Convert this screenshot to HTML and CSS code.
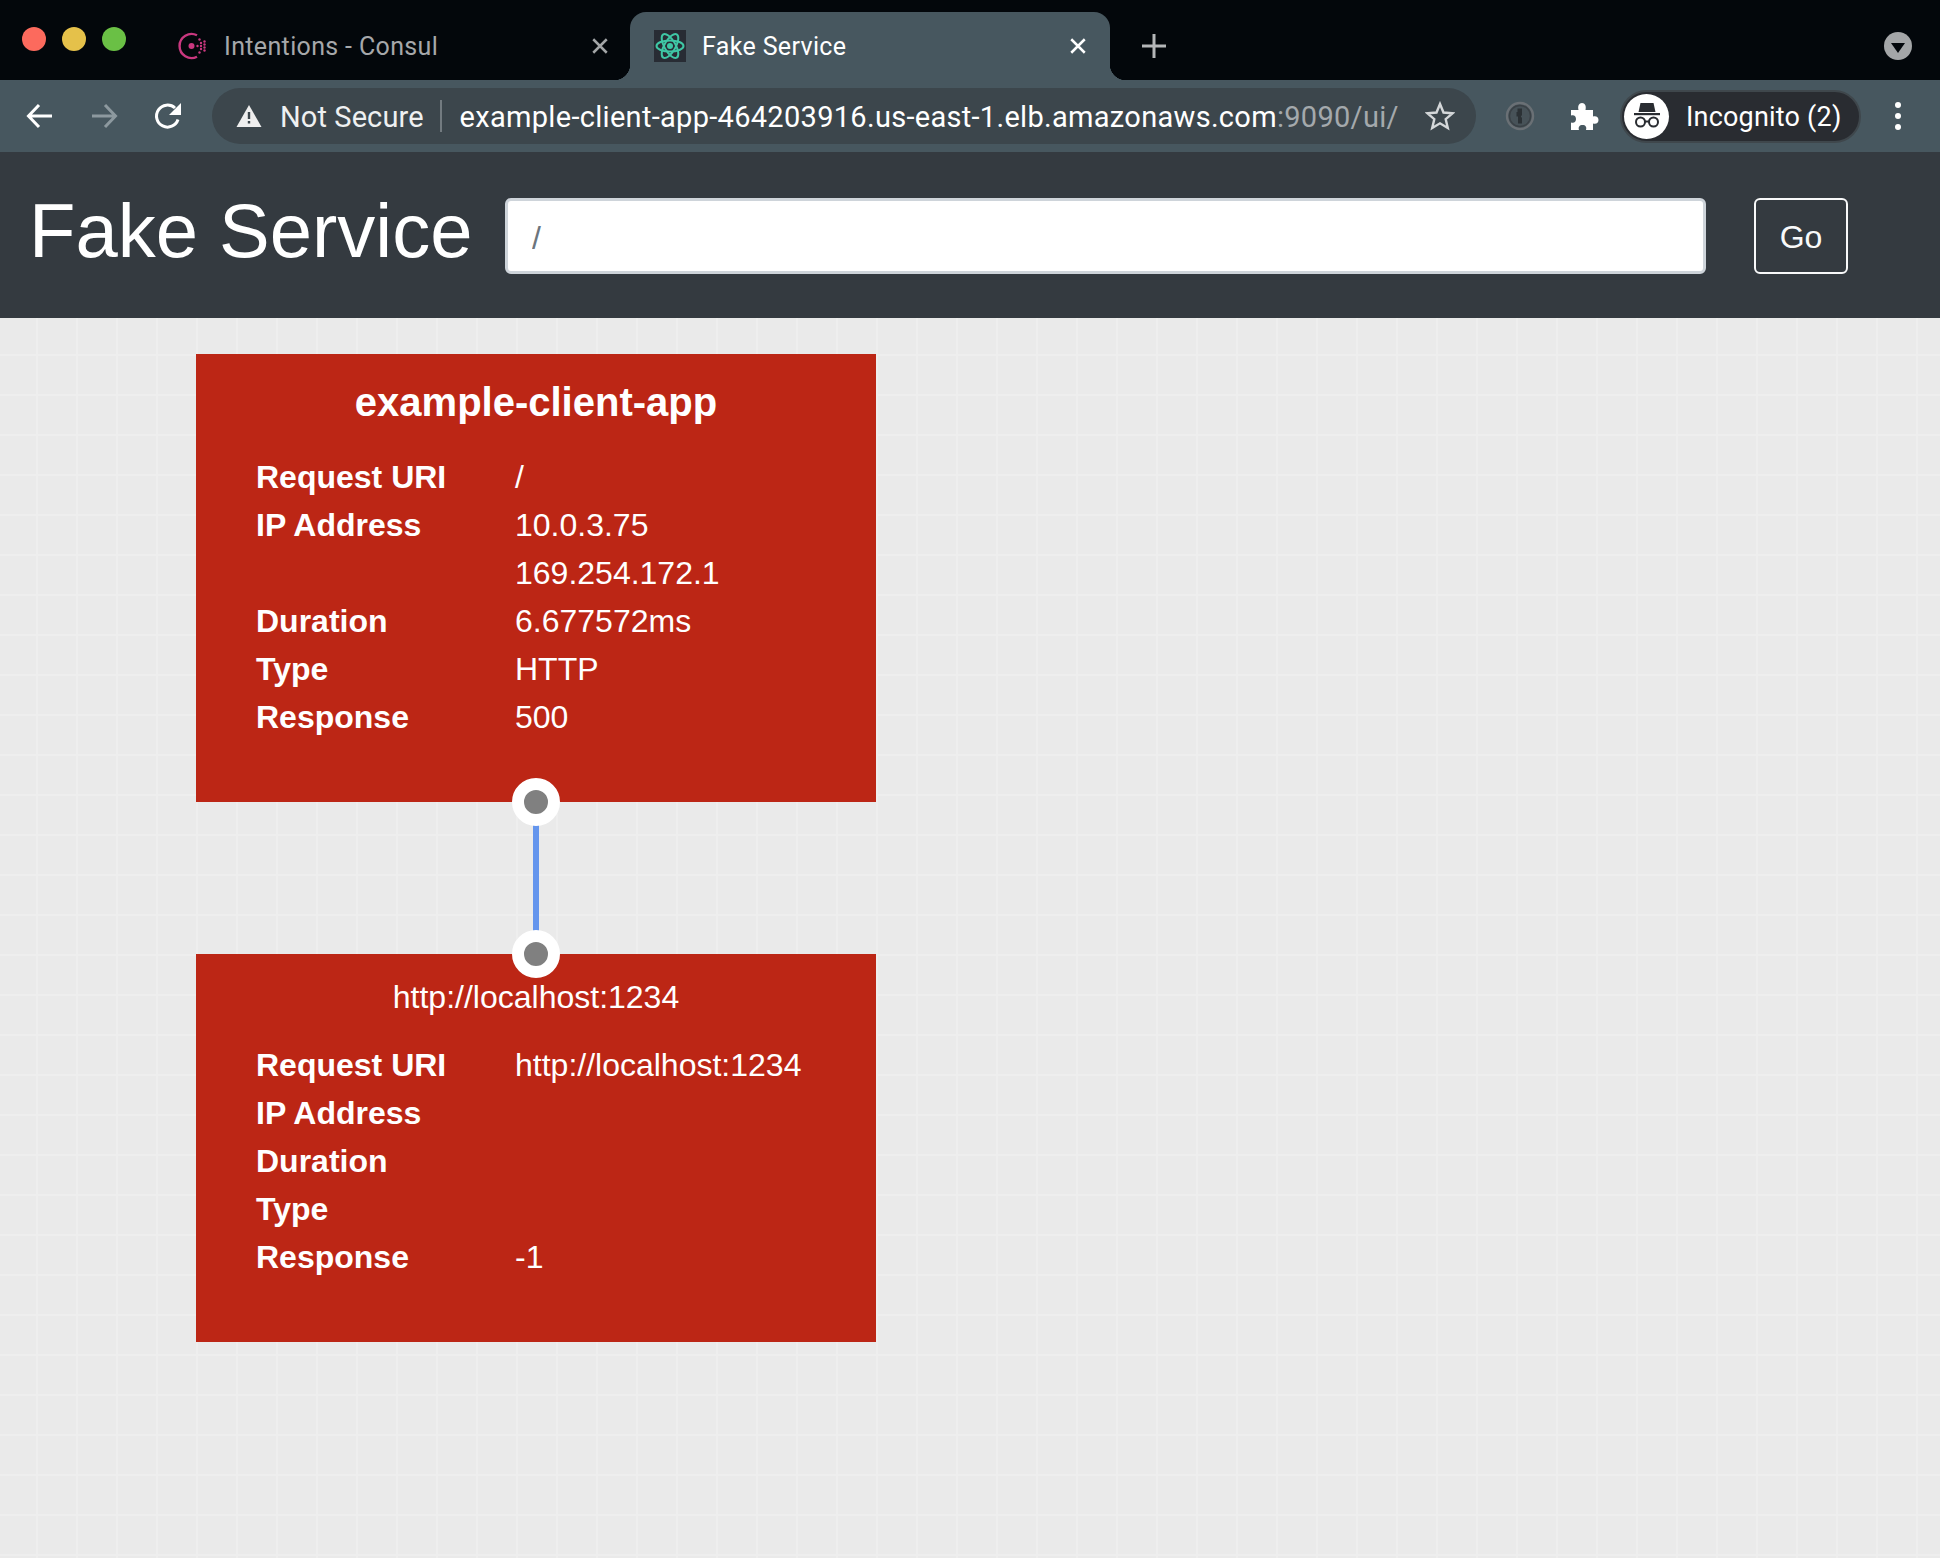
FILE: index.html
```html
<!DOCTYPE html>
<html lang="en">
<head>
    <meta charset="UTF-8">
    <title>Fake Service</title>
    <link rel="stylesheet" href="styles.css">
</head>
<body>
    <div class="tabstrip">
        <div class="lights">
            <span class="light red"></span>
            <span class="light yellow"></span>
            <span class="light green"></span>
        </div>
        <div class="tab">
            <svg class="favicon" viewBox="0 0 28 28">
                <path d="M19 3.300A12 12 0 1 0 19 24.700" fill="none" stroke="#c9387f" stroke-width="2.400"/>
                <circle cx="13.500" cy="14" r="3" fill="#c9387f"/>
                <g fill="#c9387f">
                    <circle cx="19.500" cy="14" r="1.200"/>
                    <circle cx="23" cy="11" r="1.200"/><circle cx="23" cy="14" r="1.200"/><circle cx="23" cy="17" r="1.200"/>
                    <circle cx="26.500" cy="9.500" r="1.200"/><circle cx="26.500" cy="12.500" r="1.200"/><circle cx="26.500" cy="15.500" r="1.200"/><circle cx="26.500" cy="18.500" r="1.200"/>
                    <circle cx="21.500" cy="7.500" r="1.200"/><circle cx="21.500" cy="20.500" r="1.200"/>
                </g>
            </svg>
            <span class="tab-title">Intentions - Consul</span>
            <svg class="tab-close" viewBox="0 0 16 16"><path d="M2 2L14 14M14 2L2 14" stroke="#a3a5a7" stroke-width="2.200"/></svg>
        </div>
        <div class="tab active">
            <div class="react-icon">
                <svg viewBox="0 0 32 32" width="32" height="32">
                    <g fill="none" stroke="#3fc7a5" stroke-width="2">
                        <ellipse cx="16" cy="16" rx="13.500" ry="5.600"/>
                        <ellipse cx="16" cy="16" rx="13.500" ry="5.600" transform="rotate(60 16 16)"/>
                        <ellipse cx="16" cy="16" rx="13.500" ry="5.600" transform="rotate(120 16 16)"/>
                    </g>
                    <circle cx="16" cy="16" r="3" fill="#3fc7a5"/>
                </svg>
            </div>
            <span class="tab-title">Fake Service</span>
            <svg class="tab-close" viewBox="0 0 16 16"><path d="M2 2L14 14M14 2L2 14" stroke="#fff" stroke-width="2.200"/></svg>
        </div>
        <svg class="new-tab" viewBox="0 0 26 26"><path d="M13 1V25M1 13H25" stroke="#b4b6b8" stroke-width="3"/></svg>
        <div class="tab-search"><span class="tab-search-arrow"></span></div>
    </div>

    <div class="toolbar">
        <svg class="nav-icon" viewBox="0 0 28 28"><path d="M26 14H3M13 3L2.500 14L13 25" fill="none" stroke="#fff" stroke-width="3"/></svg>
        <svg class="nav-icon" viewBox="0 0 28 28"><path d="M2 14H25M15 3L25.500 14L15 25" fill="none" stroke="#8d999f" stroke-width="3"/></svg>
        <svg class="nav-icon" viewBox="0 0 28 28"><path d="M24 17.500A11 11 0 1 1 21 6" fill="none" stroke="#fff" stroke-width="3"/><path d="M27 1V13H15Z" fill="#fff"/></svg>
        <div class="omnibox">
            <svg class="warn" viewBox="0 0 26 24"><path d="M13 1L25.500 23H.5Z" fill="#eee"/><path d="M11.800 8H14.200V15H11.800ZM11.800 17H14.200V19.500H11.800Z" fill="#3c464c"/></svg>
            <span class="not-secure">Not Secure</span>
            <span class="omni-sep"></span>
            <span class="url">example-client-app-464203916.us-east-1.elb.amazonaws.com<span class="url-dim">:9090/ui/</span></span>
            <svg class="star" viewBox="0 0 30 30"><path d="M15 3L18.500 11.500L27.500 12.300L20.700 18.200L22.800 27L15 22.300L7.200 27L9.300 18.200L2.500 12.300L11.500 11.500Z" fill="none" stroke="#d4d7d9" stroke-width="2.400"/></svg>
        </div>
        <svg class="onepass" viewBox="0 0 30 30">
            <circle cx="15" cy="15" r="13" fill="#475258" stroke="#6a7075" stroke-width="2.400"/>
            <circle cx="15" cy="15" r="10.500" fill="none" stroke="#3a4146" stroke-width="1.400"/>
            <path d="M12.500 7.500H17V14L15.800 15.500L17 17V22.500H13V15.500H11.500V11H12.500Z" fill="#2b3135"/>
        </svg>
        <svg class="puzzle" viewBox="0 0 30 30"><path d="M2 9H9.500C8.500 5 10 2 13 2S17.500 5 16.500 9H24V15.500C27.500 14.500 29.500 16.500 29.500 19S27.500 23.500 24 22.500V29H17C18 26 16.500 24 13.500 24S9 26 10 29H2V21.500C5 22.500 7 21 7 18S5 13.500 2 14.500Z" fill="#fff"/></svg>
        <div class="profile">
            <div class="avatar">
                <svg viewBox="0 0 32 32" width="32" height="32">
                    <path d="M9.500 3H22.500L24.500 12H7.500Z" fill="#292c31"/>
                    <rect x="3" y="13" width="26" height="2.200" fill="#292c31"/>
                    <g fill="none" stroke="#292c31" stroke-width="2">
                        <circle cx="9.500" cy="22" r="4.500"/>
                        <circle cx="22.500" cy="22" r="4.500"/>
                        <path d="M14 21.500H18"/>
                    </g>
                </svg>
            </div>
            <span class="profile-name">Incognito (2)</span>
        </div>
        <div class="kebab"><span></span><span></span><span></span></div>
    </div>

    <header class="navbar">
        <a class="brand">Fake Service</a>
        <input class="path-input" type="text" value="/">
        <button class="go-btn">Go</button>
    </header>

    <main class="canvas">
        <section class="card">
            <h2 class="card-title">example-client-app</h2>
            <dl class="info">
                <dt>Request URI</dt><dd>/</dd>
                <dt>IP Address</dt><dd>10.0.3.75<br>169.254.172.1</dd>
                <dt>Duration</dt><dd>6.677572ms</dd>
                <dt>Type</dt><dd>HTTP</dd>
                <dt>Response</dt><dd>500</dd>
            </dl>
            <span class="handle handle-bottom"></span>
        </section>
        <div class="edge"></div>
        <section class="card card-child">
            <span class="handle handle-top"></span>
            <h3 class="card-url">http://localhost:1234</h3>
            <dl class="info">
                <dt>Request URI</dt><dd>http://localhost:1234</dd>
                <dt>IP Address</dt><dd></dd>
                <dt>Duration</dt><dd></dd>
                <dt>Type</dt><dd></dd>
                <dt>Response</dt><dd>-1</dd>
            </dl>
        </section>
    </main>
</body>
</html>
```

FILE: styles.css
```css
html, body {
    margin: 0;
    height: 100%;
}
body {
    display: flex;
    flex-direction: column;
    height: 100vh;
    overflow: hidden;
    font-family: "Liberation Sans", Arial, sans-serif;
    background-color: #eaeaea;
}

/* tab strip */
.tabstrip {
    display: flex;
    align-items: flex-end;
    height: 80px;
    flex: none;
    box-sizing: border-box;
    padding-top: 12px;
    background-color: #03070b;
    font-family: Roboto, sans-serif;
    position: relative;
}
.lights {
    display: flex;
    gap: 16px;
    width: 178px;
    box-sizing: border-box;
    padding-left: 22px;
    align-self: flex-start;
    margin-top: 15px;
}
.light {
    width: 24px;
    height: 24px;
    border-radius: 50%;
}
.red { background-color: #fc6a5d; }
.yellow { background-color: #e5c14a; }
.green { background-color: #6ac045; }
.tab {
    display: flex;
    align-items: center;
    height: 68px;
    box-sizing: border-box;
    width: 452px;
    padding: 0 21px 0 0;
    font-size: 25px;
    letter-spacing: .35px;
    color: #a6a8aa;
    position: relative;
}
.tab.active {
    width: 480px;
    padding: 0 23px 0 24px;
    background-color: #47575f;
    border-radius: 16px 16px 0 0;
    color: #fff;
}
.tab.active::before,
.tab.active::after {
    content: "";
    position: absolute;
    bottom: 0;
    width: 16px;
    height: 16px;
}
.tab.active::before {
    left: -16px;
    background: radial-gradient(circle at 0 0, #03070b 16px, #47575f 16.5px);
}
.tab.active::after {
    right: -16px;
    background: radial-gradient(circle at 100% 0, #03070b 16px, #47575f 16.5px);
}
.favicon {
    width: 28px;
    height: 28px;
    margin-right: 18px;
}
.react-icon {
    display: flex;
    width: 32px;
    height: 32px;
    background-color: #282c34;
    margin-right: 16px;
}
.tab-title {
    flex: 1;
    white-space: nowrap;
}
.tab-close {
    width: 18px;
    height: 18px;
}
.new-tab {
    width: 26px;
    height: 26px;
    margin: 0 0 21px 31px;
}
.tab-search {
    display: flex;
    align-items: center;
    justify-content: center;
    position: absolute;
    top: 32px;
    right: 28px;
    width: 28px;
    height: 28px;
    border-radius: 50%;
    background-color: #a4a6a8;
}
.tab-search-arrow {
    margin-top: 4px;
    border-top: 10px solid #03070b;
    border-left: 7px solid transparent;
    border-right: 7px solid transparent;
}

/* toolbar */
.toolbar {
    display: flex;
    align-items: center;
    height: 72px;
    flex: none;
    box-sizing: border-box;
    padding-left: 26px;
    background-color: #47575f;
    font-family: Roboto, sans-serif;
    color: #fff;
}
.nav-icon {
    width: 28px;
    height: 28px;
    margin-right: 36px;
}
.nav-icon:nth-child(3) {
    margin-right: 30px;
}
.omnibox {
    display: flex;
    align-items: center;
    width: 1264px;
    height: 56px;
    box-sizing: border-box;
    padding: 0 21px 0 24px;
    border-radius: 28px;
    background-color: #3c464c;
    font-size: 29px;
}
.warn {
    width: 26px;
    height: 24px;
    margin-right: 18px;
}
.not-secure {
    color: #eef0f1;
    letter-spacing: .1px;
    padding-top: 1px;
}
.omni-sep {
    width: 2px;
    height: 32px;
    margin: 0 18px 0 16px;
    background-color: #737b80;
}
.url {
    flex: 1;
    white-space: nowrap;
    letter-spacing: .3px;
    padding-top: 1px;
}
.url-dim {
    color: #a4a9ac;
}
.star {
    width: 30px;
    height: 30px;
}
.onepass {
    width: 30px;
    height: 30px;
    margin-left: 29px;
}
.puzzle {
    width: 30px;
    height: 30px;
    margin-left: 34px;
}
.profile {
    display: flex;
    align-items: center;
    width: 241px;
    height: 53px;
    box-sizing: border-box;
    margin-left: 21px;
    padding-left: 2px;
    border: 2px solid #3f474c;
    border-radius: 27px;
    background-color: #292c31;
    font-size: 27px;
    letter-spacing: .2px;
}
.avatar {
    display: flex;
    align-items: center;
    justify-content: center;
    width: 45px;
    height: 45px;
    margin-right: 17px;
    border-radius: 50%;
    background-color: #fff;
}
.profile-name {
    white-space: nowrap;
    padding-top: 1px;
}
.kebab {
    display: flex;
    flex-direction: column;
    gap: 5px;
    margin-left: 34px;
}
.kebab span {
    width: 6px;
    height: 6px;
    border-radius: 50%;
    background-color: #fff;
}

/* page header */
.navbar {
    display: flex;
    align-items: center;
    height: 166px;
    flex: none;
    box-sizing: border-box;
    padding: 2px 92px 0 30px;
    background-color: #343a40;
}
.brand {
    width: 476px;
    flex: none;
    font-size: 76px;
    color: #fff;
    white-space: nowrap;
    margin: -12px 0 0 -1px;
}
.path-input {
    flex: 1;
    height: 76px;
    box-sizing: border-box;
    padding: 4px 24px 0;
    margin-right: 48px;
    border: 3px solid #ced4da;
    border-radius: 6px;
    background-color: #fff;
    color: #6c757d;
    font-family: "Liberation Sans", Arial, sans-serif;
    font-size: 32px;
}
.go-btn {
    width: 94px;
    height: 76px;
    padding-top: 3px;
    border: 2px solid #f8f9fa;
    border-radius: 6px;
    background: transparent;
    color: #f8f9fa;
    font-family: "Liberation Sans", Arial, sans-serif;
    font-size: 32px;
}

/* node canvas */
.canvas {
    flex: 1;
    padding: 36px 0 0 196px;
    background-color: #eaeaea;
    background-image:
        linear-gradient(#eee 2px, transparent 2px),
        linear-gradient(90deg, #eee 2px, transparent 2px);
    background-size: 40px 40px;
    background-position: 36px 36px;
}
.card {
    position: relative;
    width: 680px;
    height: 448px;
    box-sizing: border-box;
    padding-top: 24px;
    background-color: #bc2615;
    color: #fff;
}
.card-child {
    height: 388px;
    padding-top: 19px;
}
.card-title {
    margin: 0 0 27px;
    font-size: 40px;
    line-height: 48px;
    font-weight: bold;
    text-align: center;
}
.card-url {
    margin: 0 0 20px;
    font-size: 32px;
    line-height: 48px;
    font-weight: normal;
    text-align: center;
}
.info {
    display: grid;
    grid-template-columns: 259px 1fr;
    margin: 0;
    padding-left: 60px;
    font-size: 32px;
    line-height: 48px;
}
.info dt {
    font-weight: bold;
}
.info dd {
    margin: 0;
    min-height: 48px;
}
.edge {
    width: 6px;
    height: 152px;
    margin-left: 337px;
    background-color: #6495ed;
}
.handle {
    position: absolute;
    left: 316px;
    width: 24px;
    height: 24px;
    border: 12px solid #fff;
    border-radius: 50%;
    background-color: #808080;
}
.handle-bottom { bottom: -24px; }
.handle-top { top: -24px; }
```
